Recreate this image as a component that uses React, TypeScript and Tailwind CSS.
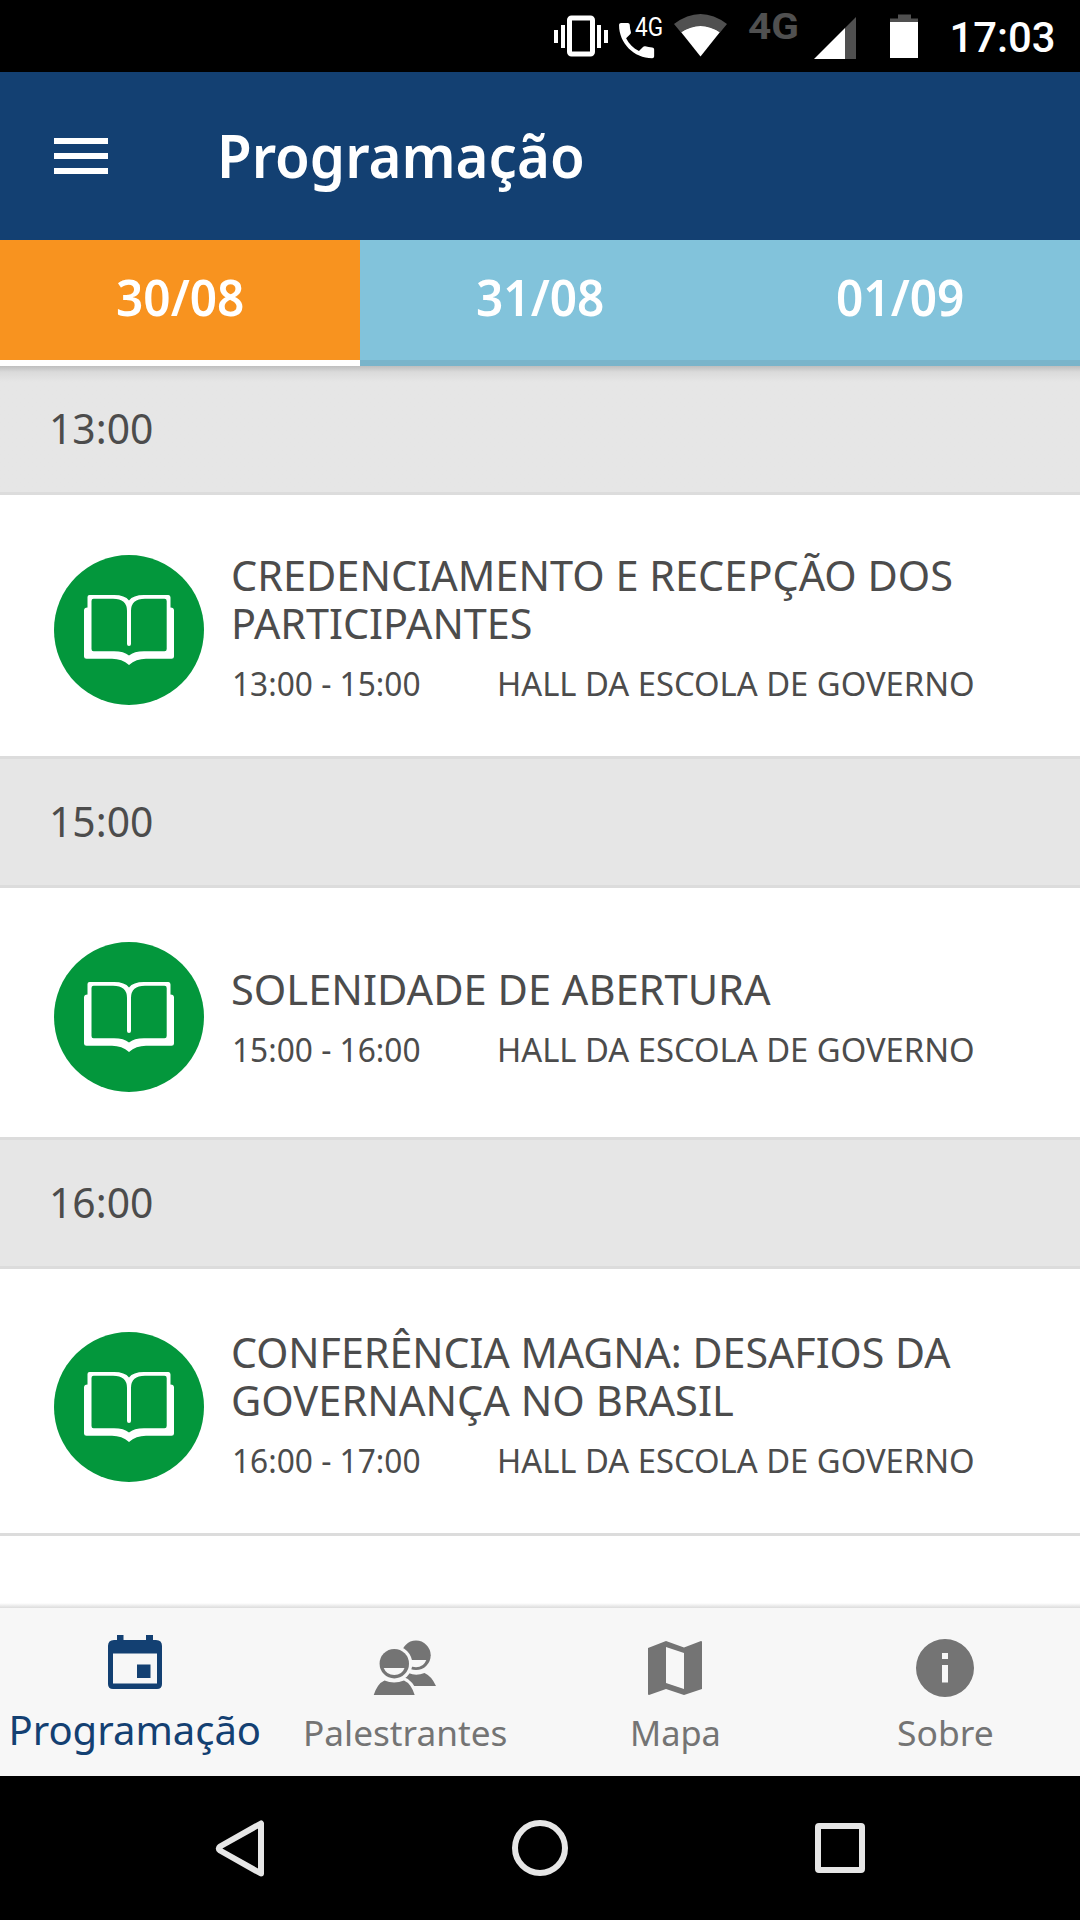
import React, { useLayoutEffect, useRef, useState } from "react";

/* One line of text, stretched or condensed horizontally to fill the given width. */
function Fit({ children, width, className = "" }: { children: string; width: number; className?: string }) {
  const ref = useRef<HTMLSpanElement>(null);
  const [scale, setScale] = useState(1);
  useLayoutEffect(() => {
    if (ref.current) setScale(width / ref.current.offsetWidth);
  }, [width, children]);
  return (
    <div className={className} style={{ width }}>
      <span
        ref={ref}
        className="inline-block origin-left whitespace-nowrap align-top"
        style={{ transform: `scaleX(${scale})` }}
      >
        {children}
      </span>
    </div>
  );
}

function BookBadge() {
  return (
    <svg className="size-[150px] shrink-0" viewBox="0 0 150 150">
      <circle cx="75" cy="75" r="75" fill="#03973c" />
      <path
        fill="#fff"
        fillRule="evenodd"
        d="M35.500 40H60Q71 40 75 45.500Q79 40 90 40H114.500Q116.500 40 116.500 42.500V52.500Q120 52.500 120 55.500V101.500Q120 103.700 117.500 103.700H92Q82 103.700 75 110Q68 103.700 58 103.700H32.500Q30 103.700 30 101.500V55.500Q30 52.500 33.500 52.500V42Q33.500 40 35.500 40ZM39.500 43.800Q37.500 43.800 37.500 46V94Q37.500 96.200 39.500 96.200H60Q70 96.200 75 100.500Q80 96.200 90 96.200H110.500Q112.700 96.200 112.700 94V46Q112.700 43.800 110.500 43.800H91Q77 43.800 77 56V89Q77 91 75 91Q73 91 73 89V56Q73 43.800 59 43.800Z"
      />
    </svg>
  );
}

function StatusBar() {
  return (
    <div className="h-[72px] shrink-0 bg-black">
      <svg className="h-[72px] w-[1080px]" viewBox="0 0 1080 72">
        <g fill="#fff">
          <path d="M554 30h4v13h-4zM561 25h4v23h-4zM597 25h4v23h-4zM604 30h4v13h-4z" />
          <path
            transform="translate(613.200 17.200) scale(1.95)"
            d="M6.620 10.790c1.440 2.830 3.760 5.140 6.590 6.590l2.200-2.200c.27-.27.67-.36 1.020-.24 1.120.37 2.330.57 3.570.57.55 0 1 .45 1 1V20c0 .55-.45 1-1 1-9.390 0-17-7.610-17-17 0-.55.45-1 1-1h3.500c.55 0 1 .45 1 1 0 1.250.2 2.450.57 3.570.11.35.03.74-.25 1.020l-2.200 2.200z"
          />
          <path d="M700.500 56.500L681 32q19.500-13 39 0z" />
          <path d="M814 59L845 28V59z" />
          <rect x="890" y="22" width="28" height="36" />
        </g>
        <rect x="569.500" y="18" width="23" height="36" rx="2" fill="none" stroke="#fff" strokeWidth="5" />
        <g fill="#505050">
          <path d="M674 24q26.500-20 53 0l-7 8.500q-19.500-13-39 0z" />
          <path d="M845 28L856 17V59H845z" />
          <path d="M898 14.500h13v4h7v3.500h-28v-3.500h8z" />
        </g>
        <text x="635" y="36" fill="#fff" fontFamily="Roboto" fontSize="26" textLength="28" lengthAdjust="spacingAndGlyphs">4G</text>
        <text x="748" y="38.500" fill="#505050" fontFamily="Roboto" fontWeight="700" fontSize="37" textLength="51" lengthAdjust="spacingAndGlyphs">4G</text>
        <text x="949.500" y="52" fill="#fff" fontFamily="Roboto" fontWeight="500" fontSize="42" textLength="106" lengthAdjust="spacingAndGlyphs">17:03</text>
      </svg>
    </div>
  );
}

function DateTab({ children, active }: { children: string; active?: boolean }) {
  return (
    <div
      className={`flex flex-1 justify-center border-b-[6px] pt-[22px] text-[50px] leading-[70px] font-semibold text-white ${
        active ? "border-white bg-[#f8931f]" : "border-[#7ab4ca] bg-[#82c3db]"
      }`}
    >
      <Fit width={128}>{children}</Fit>
    </div>
  );
}

function TimeHeader({ children, first }: { children: string; first?: boolean }) {
  return (
    <div
      className={`h-[129px] shrink-0 border-b-[3px] border-[#dcdcdc] pt-[33px] pl-[49px] text-[42px] leading-[58px] ${
        first ? "bg-linear-to-b from-[#bebebe] via-[#dadada] via-[6px] to-[#e6e6e6] to-[16px]" : "bg-[#e6e6e6]"
      }`}
    >
      <Fit width={104}>{children}</Fit>
    </div>
  );
}

type SessionProps = { lines: [string, number][]; time: string; className: string; badge: string; body: string };

function Session({ lines, time, className, badge, body }: SessionProps) {
  return (
    <div className={`flex shrink-0 border-b-[3px] border-[#dcdcdc] bg-white pl-[54px] ${className}`}>
      <div className={badge}>
        <BookBadge />
      </div>
      <div className={`ml-[26.5px] ${body}`}>
        {lines.map(([text, width]) => (
          <Fit key={text} width={width} className="text-[42px] leading-[48px]">
            {text}
          </Fit>
        ))}
        <div className="mt-[17px] flex gap-[76px] pl-px text-[32px] leading-[40px]">
          <Fit width={189}>{time}</Fit>
          <Fit width={478}>HALL DA ESCOLA DE GOVERNO</Fit>
        </div>
      </div>
    </div>
  );
}

function NavItem({ label, width, active, children }: { label: string; width: number; active?: boolean; children: React.ReactNode }) {
  return (
    <div className={`flex w-[270px] flex-col items-center pt-[22px] ${active ? "text-[#134072]" : "text-[#747474]"}`}>
      <svg className="size-[70px]" viewBox="0 0 70 70" fill="currentColor">
        {children}
      </svg>
      <Fit width={width} className={active ? "mt-2.5 text-[40px] leading-10" : "mt-[13px] text-[34px] leading-10"}>
        {label}
      </Fit>
    </div>
  );
}

export default function App() {
  return (
    <div className="flex h-[1920px] w-[1080px] flex-col overflow-hidden bg-white font-['Noto_Sans',sans-serif] text-[#4c4c4c]">
      <StatusBar />
      <header className="flex h-[168px] shrink-0 items-center bg-[#134072] pl-[54px] text-white">
        <div className="flex w-[163px] flex-col gap-[9px]">
          <i className="h-1.5 w-[54px] bg-white" />
          <i className="h-1.5 w-[54px] bg-white" />
          <i className="h-1.5 w-[54px] bg-white" />
        </div>
        <Fit width={368} className="mb-0.5 text-[59px] font-semibold">Programação</Fit>
      </header>

      <div className="flex h-[126px] shrink-0">
        <DateTab active>30/08</DateTab>
        <DateTab>31/08</DateTab>
        <DateTab>01/09</DateTab>
      </div>

      <main className="flex h-[1242px] shrink-0 flex-col">
        <TimeHeader first>13:00</TimeHeader>
        <Session
          className="h-[264px]"
          badge="pt-[60px]"
          body="pt-14"
          time="13:00 - 15:00"
          lines={[["CREDENCIAMENTO E RECEPÇÃO DOS", 722], ["PARTICIPANTES", 301]]}
        />
        <TimeHeader>15:00</TimeHeader>
        <Session
          className="h-[252px]"
          badge="pt-[54px]"
          body="pt-[77px]"
          time="15:00 - 16:00"
          lines={[["SOLENIDADE DE ABERTURA", 540]]}
        />
        <TimeHeader>16:00</TimeHeader>
        <Session
          className="h-[267px]"
          badge="pt-[63px]"
          body="pt-[59px]"
          time="16:00 - 17:00"
          lines={[["CONFERÊNCIA MAGNA: DESAFIOS DA", 720], ["GOVERNANÇA NO BRASIL", 503]]}
        />
        <div className="mt-auto h-[5px] bg-linear-to-b from-white to-[#dcdcdc]" />
      </main>

      <nav className="flex h-[168px] shrink-0 bg-[#f7f7f7]">
        <NavItem label="Programação" width={253} active>
          <path
            fillRule="evenodd"
            d="M17 5h6.500v5H46V5h7v5h3q6 0 6 6V54q0 5-5 5H13q-5 0-5-5V16q0-6 6-6h3zM13 23.500V53.500H57V23.500zM37 34.500H50.500V48H37z"
          />
        </NavItem>
        <NavItem label="Palestrantes" width={204}>
          <circle cx="46" cy="25.300" r="14.700" />
          <path d="M35 30H56.300Q53.500 37.300 46 37.300Q38 37.300 35 30Z" fill="#f7f7f7" />
          <path d="M33 46L38.500 43Q46 46.500 54.500 43Q61.500 46 66 56H40Z" />
          <circle cx="24.300" cy="33.700" r="18" fill="#f7f7f7" />
          <path d="M28 46Q39 46 45.500 58L41.500 60L32 52Z" fill="#f7f7f7" />
          <circle cx="24.300" cy="33.700" r="14.700" />
          <path d="M13.700 38H34.500Q32 45 24.300 45Q16.500 45 13.700 38Z" fill="#f7f7f7" />
          <path d="M3.700 65Q7.500 53.500 14.500 50.500Q24 54.500 34 50.500Q41 53.500 44.700 65Z" />
        </NavItem>
        <NavItem label="Mapa" width={91}>
          <path fillRule="evenodd" d="M8 18L26 11L44 17.500L61 11Q62 11 62 12V59L44 65L26 59L9 65Q8 65 8 64zM26 17V53L44 59V23z" />
        </NavItem>
        <NavItem label="Sobre" width={97}>
          <path fillRule="evenodd" d="M35 9a29 29 0 1 0 0 58a29 29 0 1 0 0-58zM32 23h6v6h-6zM32 35h6v17.500h-6z" />
        </NavItem>
      </nav>

      <footer className="h-36 shrink-0 bg-black">
        <svg className="h-36 w-[1080px]" viewBox="0 0 1080 144" fill="none" stroke="#e6e6e6" strokeWidth="6" strokeLinejoin="round">
          <path d="M261 47.500V97.500L220 74.500Q217.500 72.500 220 70.500Z" />
          <circle cx="540" cy="72" r="25" />
          <rect x="818" y="50" width="44" height="44" rx="1" />
        </svg>
      </footer>
    </div>
  );
}
